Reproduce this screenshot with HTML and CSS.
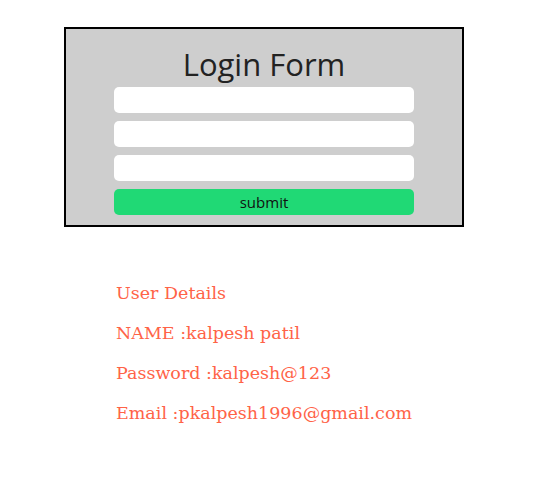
FILE: index.html
```html
<!DOCTYPE html>
<html>
<head>
<meta charset="utf-8">
<link rel="stylesheet" href="styles.css">
</head>
<body>
<div class="box">
  <h1 class="title">Login Form</h1>
  <div class="fields">
    <input class="field" type="text">
    <input class="field" type="password">
    <input class="field" type="email">
    <button class="submit">submit</button>
  </div>
</div>
<div class="details">
  <p class="line">User Details</p>
  <p class="line">NAME :kalpesh patil</p>
  <p class="line">Password :kalpesh@123</p>
  <p class="line">Email :pkalpesh1996@gmail.com</p>
</div>
</body>
</html>
```
FILE: styles.css
```css
body {
  margin: 8px;
  background: #fff;
}
.box {
  box-sizing: border-box;
  width: 400px;
  height: 200px;
  margin: 19px 0 0 56px;
  border: 2px solid #000;
  background: #cecece;
  display: flex;
  flex-direction: column;
  align-items: center;
}
.title {
  margin: 15px 0 0;
  height: 43px;
  font-family: "Open Sans", sans-serif;
  font-weight: 400;
  font-size: 31px;
  line-height: 41px;
  color: #222;
}
.fields {
  display: flex;
  flex-direction: column;
  gap: 8px;
  width: 300px;
}
.field, .submit {
  box-sizing: border-box;
  width: 300px;
  height: 26px;
  border: none;
  border-radius: 5px;
  background: #fff;
  margin: 0;
  padding: 0;
  outline: none;
}
.submit {
  background: #20d975;
  font-family: "Open Sans", sans-serif;
  font-size: 15px;
  color: #111;
}
.details {
  margin: 54px 0 0 108px;
  display: flex;
  flex-direction: column;
  gap: 16px;
}
.line {
  margin: 0;
  font-family: "DejaVu Serif", serif;
  font-size: 17.5px;
  line-height: 24px;
  color: #ff6347;
}
```
